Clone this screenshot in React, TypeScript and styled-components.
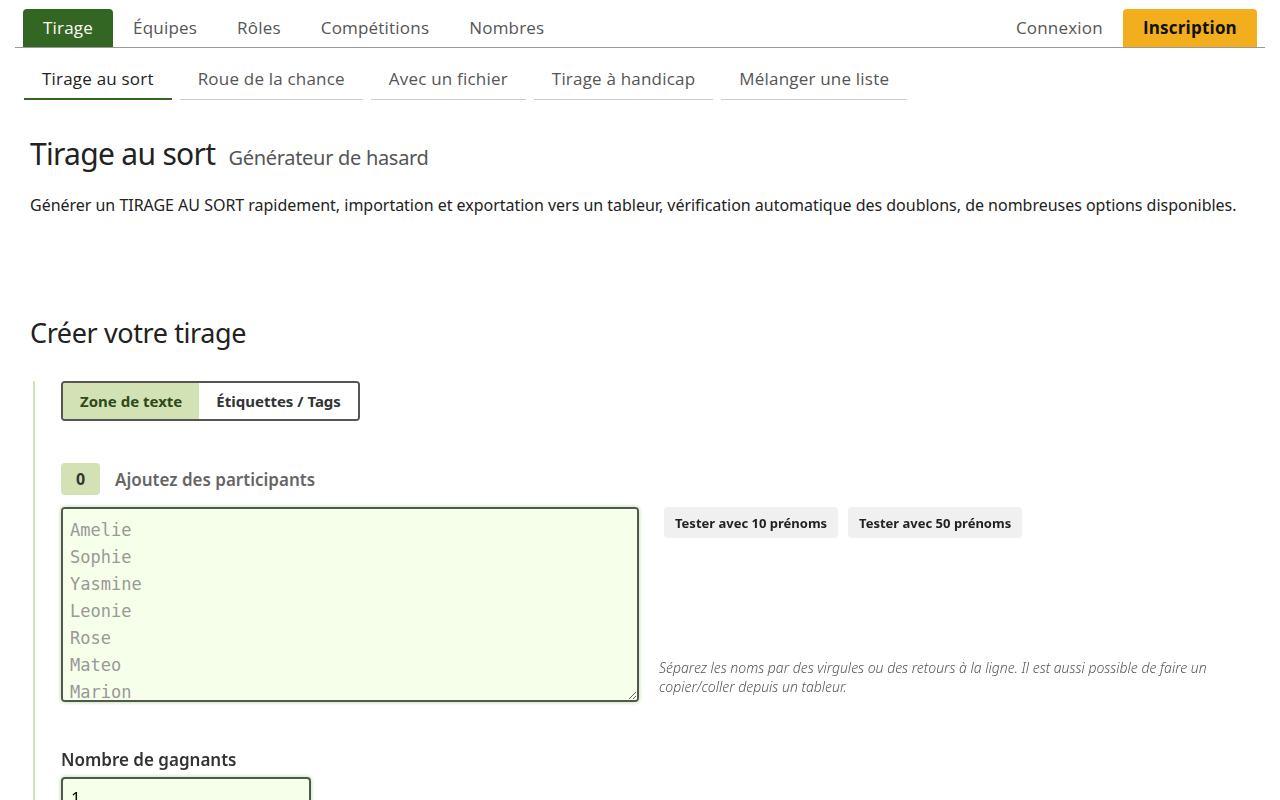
import React, { useState } from "react";
import styled, { createGlobalStyle } from "styled-components";

const GlobalStyle = createGlobalStyle`
    body {
        margin: 0;
        background: #ffffff;
        font-family: "Noto Sans", "Open Sans", sans-serif;
        color: #222;
    }
    * {
        box-sizing: border-box;
    }
`;

const mainTabs = ["Tirage", "Équipes", "Rôles", "Compétitions", "Nombres"];
const subTabs = [
    "Tirage au sort",
    "Roue de la chance",
    "Avec un fichier",
    "Tirage à handicap",
    "Mélanger une liste",
];
const names = "Amelie\nSophie\nYasmine\nLeonie\nRose\nMateo\nMarion\nLucas\nHugo\nLina";

export default function App() {
    const [mode, setMode] = useState("text");

    return (
        <>
            <GlobalStyle />
            <Page>
                <TopNav>
                    <NavGroup>
                        {mainTabs.map((t, i) => (
                            <NavTab key={t} active={i === 0}>
                                {t}
                            </NavTab>
                        ))}
                    </NavGroup>
                    <NavGroup>
                        <NavTab>Connexion</NavTab>
                        <SignupTab>Inscription</SignupTab>
                    </NavGroup>
                </TopNav>

                <SubNav>
                    {subTabs.map((t, i) => (
                        <SubTab key={t} active={i === 0}>
                            {t}
                        </SubTab>
                    ))}
                </SubNav>

                <Content>
                    <Title>
                        Tirage au sort <small>Générateur de hasard</small>
                    </Title>
                    <Intro>
                        Générer un TIRAGE AU SORT rapidement, importation et exportation vers un
                        tableur, vérification automatique des doublons, de nombreuses options
                        disponibles.
                    </Intro>

                    <SectionTitle>Créer votre tirage</SectionTitle>

                    <FormBlock>
                        <Toggle>
                            <ToggleButton active={mode === "text"} onClick={() => setMode("text")}>
                                Zone de texte
                            </ToggleButton>
                            <ToggleButton active={mode === "tags"} onClick={() => setMode("tags")}>
                                Étiquettes / Tags
                            </ToggleButton>
                        </Toggle>

                        <CountRow>
                            <Count>0</Count>
                            <CountLabel>Ajoutez des participants</CountLabel>
                        </CountRow>

                        <EntryRow>
                            <Names placeholder={names} />
                            <SideColumn>
                                <Samples>
                                    <SampleButton>Tester avec 10 prénoms</SampleButton>
                                    <SampleButton>Tester avec 50 prénoms</SampleButton>
                                </Samples>
                                <Hint>
                                    Séparez les noms par des virgules ou des retours à la ligne. Il
                                    est aussi possible de faire un copier/coller depuis un tableur.
                                </Hint>
                            </SideColumn>
                        </EntryRow>

                        <FieldLabel>Nombre de gagnants</FieldLabel>
                        <NumberInput defaultValue="1" />
                    </FormBlock>
                </Content>
            </Page>
        </>
    );
}

const Page = styled.div`
    height: 800px;
    overflow: hidden;
`;

const TopNav = styled.nav`
    margin: 9px 15px 0;
    padding: 0 8px;
    display: flex;
    justify-content: space-between;
    border-bottom: 1px solid #999;
`;

const NavGroup = styled.div`
    display: flex;
`;

const NavTab = styled.a<{ active?: boolean }>`
    height: 38px;
    padding: 0 20px 2px;
    display: flex;
    align-items: center;
    font-family: "Open Sans", "Noto Sans", sans-serif;
    font-size: 17px;
    letter-spacing: 0.2px;
    color: ${(p) => (p.active ? "#fff" : "#555")};
    background: ${(p) => (p.active ? "#336622" : "transparent")};
    border-radius: 4px 4px 0 0;
    cursor: pointer;
`;

const SignupTab = styled(NavTab)`
    background: #f2ae1c;
    color: #111;
    font-weight: 700;
`;

const SubNav = styled.div`
    margin: 12px 24px 0;
    display: flex;
    gap: 8px;
`;

const SubTab = styled.a<{ active?: boolean }>`
    height: 40px;
    padding: 0 18px 2px;
    display: flex;
    align-items: center;
    font-family: "Open Sans", "Noto Sans", sans-serif;
    font-size: 17px;
    letter-spacing: 0.2px;
    color: ${(p) => (p.active ? "#222" : "#555")};
    border-bottom: ${(p) => (p.active ? "2px solid #336622" : "1px solid #ccc")};
    cursor: pointer;
`;

const Content = styled.main`
    padding: 0 30px;
`;

const Title = styled.h1`
    margin: 33px 0 0;
    font-size: 30px;
    font-weight: 400;
    color: #222;
    letter-spacing: -0.7px;

    small {
        margin-left: 6px;
        font-size: 20px;
        color: #555;
        letter-spacing: -0.3px;
    }
`;

const Intro = styled.p`
    margin: 18px 0 0;
    font-size: 16px;
    letter-spacing: -0.02px;
    line-height: 26px;
    color: #222;
`;

const SectionTitle = styled.h2`
    margin: 96px 0 0;
    font-size: 27px;
    font-weight: 400;
    color: #222;
    letter-spacing: -0.4px;
`;

const FormBlock = styled.section`
    margin: 30px 0 0 3px;
    padding-left: 26px;
    border-left: 2px solid #d2e2b4;
    padding-bottom: 40px;
`;

const Toggle = styled.div`
    display: inline-flex;
    border: 2px solid #555;
    border-radius: 4px;
    overflow: hidden;
`;

const ToggleButton = styled.button<{ active?: boolean }>`
    height: 36px;
    padding: 0 17px;
    border: 0;
    font-family: "Noto Sans", sans-serif;
    font-size: 15px;
    font-weight: 700;
    color: ${(p) => (p.active ? "#2e4a1a" : "#333")};
    background: ${(p) => (p.active ? "#d2e2b4" : "#fff")};
    cursor: pointer;
`;

const CountRow = styled.div`
    margin-top: 42px;
    display: flex;
    align-items: center;
    gap: 15px;
`;

const Count = styled.span`
    width: 39px;
    height: 32px;
    display: flex;
    align-items: center;
    justify-content: center;
    border-radius: 4px;
    background: #d2e2b4;
    font-size: 16px;
    font-weight: 700;
    color: #333;
`;

const CountLabel = styled.span`
    font-size: 17px;
    font-weight: 600;
    color: #666;
`;

const EntryRow = styled.div`
    margin-top: 12px;
    display: flex;
    gap: 20px;
`;

const Names = styled.textarea`
    width: 578px;
    height: 195px;
    padding: 8px 7px;
    border: 2px solid #555;
    border-radius: 4px;
    background: #f6ffe9;
    box-shadow: 0 0 4px #a6e08a;
    font-family: "DejaVu Sans Mono", "Liberation Mono", monospace;
    font-size: 17px;
    line-height: 27px;
    resize: vertical;
    outline: none;

    &::placeholder {
        color: #999;
    }
`;

const SideColumn = styled.div`
    flex: 1;
    display: flex;
    flex-direction: column;
    justify-content: space-between;
`;

const Samples = styled.div`
    display: flex;
    gap: 10px;
    padding-left: 5px;
`;

const SampleButton = styled.button`
    height: 31px;
    padding: 0 11px;
    border: 0;
    border-radius: 4px;
    background: #f0f0f0;
    font-family: "Noto Sans", sans-serif;
    font-size: 13px;
    font-weight: 700;
    color: #222;
    cursor: pointer;
`;

const Hint = styled.p`
    margin: 0 0 6px;
    font-size: 14px;
    line-height: 19px;
    font-style: italic;
    font-weight: 300;
    color: #555;
`;

const FieldLabel = styled.label`
    display: block;
    margin-top: 46px;
    font-size: 17px;
    font-weight: 600;
    color: #333;
`;

const NumberInput = styled.input`
    margin-top: 6px;
    width: 250px;
    height: 40px;
    padding: 0 8px;
    border: 2px solid #555;
    border-radius: 4px;
    background: #f6ffe9;
    box-shadow: 0 0 4px #a6e08a;
    font-family: "Noto Sans", sans-serif;
    font-size: 17px;
    outline: none;
`;
